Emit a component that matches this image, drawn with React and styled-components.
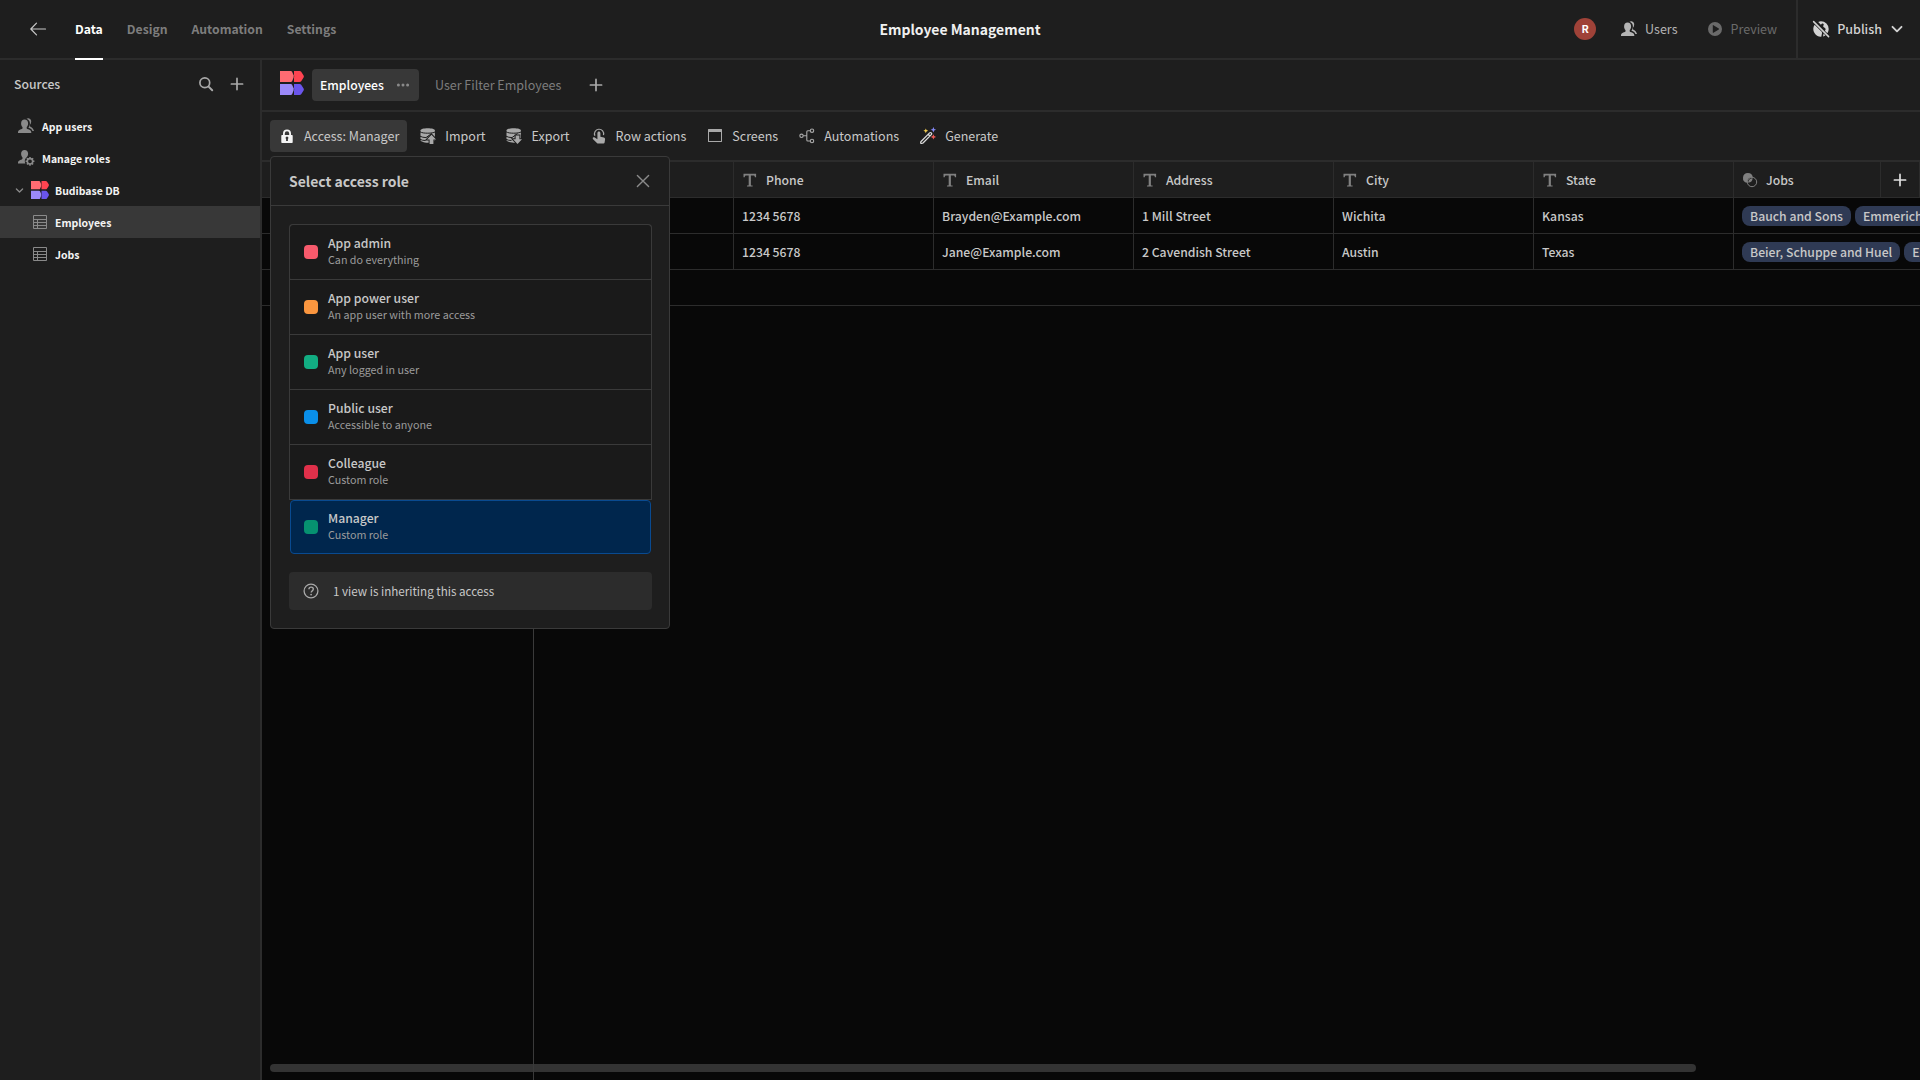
import React, { useState } from 'react';
import styled, { createGlobalStyle } from 'styled-components';

const GlobalStyle = createGlobalStyle`
  * {
    box-sizing: border-box;
  }

  html, body, #root {
    height: 100%;
    margin: 0;
  }

  body {
    background: #080808;
    color: #c8c8c8;
    font-family: "Noto Sans CJK SC", "Noto Sans", sans-serif;
    font-size: 14px;
    font-size-adjust: 0.486;
    line-height: 20px;
    overflow: hidden;
  }

  button {
    background: none;
    border: none;
    color: inherit;
    cursor: pointer;
    font: inherit;
    font-size-adjust: inherit;
    margin: 0;
    padding: 0;
    text-align: left;
  }

  a {
    color: inherit;
    text-decoration: none;
  }

  svg {
    display: block;
    flex: none;
  }
`;

const roles = [
  { name: 'App admin', description: 'Can do everything', color: '#f75a6c' },
  { name: 'App power user', description: 'An app user with more access', color: '#fa963f' },
  { name: 'App user', description: 'Any logged in user', color: '#12ad82' },
  { name: 'Public user', description: 'Accessible to anyone', color: '#0a8fe9' },
  { name: 'Colleague', description: 'Custom role', color: '#e0304a' },
  { name: 'Manager', description: 'Custom role', color: '#069170' },
];

const columns = ['Phone', 'Email', 'Address', 'City', 'State'];

const rows = [
  {
    cells: ['1234 5678', 'Brayden@Example.com', '1 Mill Street', 'Wichita', 'Kansas'],
    jobs: ['Bauch and Sons', 'Emmerich'],
  },
  {
    cells: ['1234 5678', 'Jane@Example.com', '2 Cavendish Street', 'Austin', 'Texas'],
    jobs: ['Beier, Schuppe and Huel', 'Emmerich'],
  },
];

/* icons */

const Svg = ({ size = 16, box = 16, children }) => (
  <svg width={size} height={size} viewBox={`0 0 ${box} ${box}`} fill="currentColor" aria-hidden="true">
    {children}
  </svg>
);

const Stroke = ({ d, width = 1.5 }) => (
  <path d={d} fill="none" stroke="currentColor" strokeWidth={width} strokeLinecap="round" strokeLinejoin="round" />
);

const BackIcon = () => (
  <Svg size={18} box={18}>
    <Stroke width={1.2} d="M16.5 9H2M7.5 3.2 1.8 9l5.7 5.8" />
  </Svg>
);

const SearchIcon = () => (
  <Svg>
    <circle cx="6.8" cy="6.8" r="4.9" fill="none" stroke="currentColor" strokeWidth="1.7" />
    <Stroke width={2} d="m10.6 10.6 3.6 3.6" />
  </Svg>
);

const PlusIcon = () => (
  <Svg>
    <Stroke width={1.7} d="M8 2.4v11.2M2.4 8h11.2" />
  </Svg>
);

const UsersIcon = () => (
  <Svg size={18} box={18}>
    <path d="M7.6 2.6c2.2 0 3.5 1.5 3.5 3.8 0 1.6-.6 2.8-1.4 3.6v1.2c0 .4.3.7.7.8 2.4.7 3.9 1.4 3.9 3.3v.7H1v-.7c0-1.9 1.5-2.6 3.8-3.3.4-.1.7-.4.7-.8V10c-.8-.8-1.4-2-1.4-3.6 0-2.3 1.3-3.8 3.500-3.800Z" />
    <path d="M9.5 1.7c.6-.4 1.3-.6 2-.5 1.900.2 2.800 1.700 2.700 3.500-.1 1.300-.5 2.400-1.200 3.100v1.100c0 .3.2.6.5.8 1.9 1 3 2.200 3.500 4.300h-1.600c-.5-1.800-1.900-2.600-3.900-3.200v-.4c.9-1 1.4-2.400 1.400-4 0-2.300-1.300-4.100-3.400-4.700Z" />
  </Svg>
);

const UserGearIcon = () => (
  <Svg size={18} box={18}>
    <path d="M7.6 1c2.200 0 3.500 1.500 3.500 3.800 0 1.500-.6 2.700-1.400 3.500-1.200.9-1.900 2.200-1.900 3.800 0 .9.2 1.700.6 2.400H1v-.9c0-1.900 1.500-2.500 3.800-3.200.4-.1.7-.4.7-.8V8.400C4.700 7.600 4.100 6.400 4.100 4.800 4.100 2.500 5.400 1 7.600 1Z" />
    <circle cx="13" cy="12.3" r="2.7" fill="none" stroke="currentColor" strokeWidth="1.6" />
    <path d="M13 7.900v2M13 14.700v2M8.600 12.300h2M15.400 12.300h2M9.900 9.200l1.400 1.400M14.700 14l1.400 1.400M16.100 9.200l-1.400 1.400M11.300 14l-1.400 1.400" stroke="currentColor" strokeWidth="1.5" />
  </Svg>
);

const TableIcon = () => (
  <Svg>
    <path d="M1.500 1.500h13v13h-13zM1.500 5.500h13M1.500 8.500h13M1.500 11.500h13M5.500 5.500v9" fill="none" stroke="currentColor" />
  </Svg>
);

const ChevronIcon = ({ width, size = 16 }) => (
  <Svg size={size}>
    <Stroke width={width} d="M3.500 5.800 8 10.300l4.500-4.500" />
  </Svg>
);

const LogoIcon = ({ size = 24 }) => (
  <Svg size={size} box={24}>
    <path fill="#ff6b72" d="M0 0h10.800c.6 0 1 .3 1.300.8l1.500 3.500c.2.700.2 1.500 0 2.200l-1.500 3.700c-.3.500-.7.800-1.300.8H0Z" />
    <path fill="#ff4451" d="M14 0h5.600c.7 0 1.200.3 1.600.8l2.400 3.600c.4.700.4 1.500 0 2.200l-2.400 3.600c-.4.500-.9.800-1.600.8H14V6.800c.3-.9.3-1.800 0-2.700Z" />
    <path fill="#9b89f8" d="M0 13h10.800c.6 0 1 .3 1.300.8l1.500 3.500c.2.700.2 1.500 0 2.200l-1.500 3.700c-.3.500-.7.800-1.300.8H0Z" />
    <path fill="#6a55ec" d="M14 13h5.600c.7 0 1.200.3 1.600.8l2.400 3.600c.4.700.4 1.500 0 2.200l-2.400 3.600c-.4.500-.9.800-1.600.8H14v-4.200c.3-.9.3-1.800 0-2.700Z" />
  </Svg>
);

const DotsIcon = () => (
  <Svg>
    <circle cx="3.4" cy="8" r="1.5" />
    <circle cx="8" cy="8" r="1.5" />
    <circle cx="12.6" cy="8" r="1.5" />
  </Svg>
);

const LockIcon = () => (
  <Svg size={18} box={18}>
    <path fillRule="evenodd" d="M14 8h-1V6.500a4 4 0 0 0-8 0V8H4a.7.7 0 0 0-.7.700v6.600c0 .4.300.7.700.7h10c.4 0 .7-.3.7-.7V8.700A.7.7 0 0 0 14 8ZM6.800 6.500a2.200 2.200 0 0 1 4.400 0V8H6.800ZM9.900 12.100V14H8.100v-1.900a1.400 1.400 0 1 1 1.800 0Z" />
  </Svg>
);

const DataIcon = ({ arrow }) => (
  <Svg size={18} box={18}>
    <path d="M1.500 3.500c0-1.300 3.200-2.200 7.200-2.200s7.200.9 7.200 2.200V13c0 1.400-3.200 2.700-7.200 2.700S1.500 14.400 1.500 13Z" />
    <path d="M1 4.800c1.700 1 4.400 1.400 7.700 1.400s6-.4 7.700-1.400M1 9.200c1.800.9 3.700 1.400 6 1.400l5.500-4M1 12.300c1.800.9 3.200 1.200 5.500 1.200" fill="none" stroke="#1e1e1e" strokeWidth="1" />
    <path d={arrow} stroke="#1e1e1e" strokeWidth="2" />
    <path d={arrow} />
  </Svg>
);

const ImportIcon = () => <DataIcon arrow="m12.500 7.800 4.500 4.700h-2.600v4.500h-3.800v-4.500H8Z" />;

const ExportIcon = () => <DataIcon arrow="m12.500 17 4.500-4.700h-2.600V8.500h-3.800v3.800H8Z" />;

const TapIcon = () => (
  <Svg size={18} box={18}>
    <path d="M4.900 8.800a4.600 4.600 0 1 1 8.600-.7" fill="none" stroke="currentColor" strokeWidth="1.2" />
    <path d="M7.400 6.200c0-1 .7-1.700 1.500-1.700s1.500.7 1.500 1.700v3.600l3.400.7c.9.200 1.400.9 1.300 1.800l-.5 3.300c-.1.600-.5 1-1.100 1H8.300c-.6 0-1-.2-1.400-.6l-3.800-3.800c-.5-.6-.5-1.200 0-1.600.5-.4 1.100-.3 1.600 0l2.700 1.600Z" />
  </Svg>
);

const ScreenIcon = () => (
  <Svg size={18} box={18}>
    <path fillRule="evenodd" d="M2.500 2h13c.3 0 .5.200.5.500v12c0 .3-.2.500-.5.500h-13a.5.500 0 0 1-.5-.5v-12c0-.3.200-.5.500-.5ZM3 5v9h12V5Z" />
  </Svg>
);

const FlowIcon = () => (
  <Svg size={18} box={18}>
    <g fill="none" stroke="currentColor" strokeWidth="1.1">
      <circle cx="3.5" cy="8.8" r="1.7" />
      <circle cx="14" cy="3.7" r="1.7" />
      <circle cx="14" cy="14" r="1.7" />
      <path d="M5.200 8.800h3.600M12.300 3.700H9.800c-.6 0-1 .4-1 1v8.300c0 .6.400 1 1 1h2.500" />
    </g>
  </Svg>
);

const WandIcon = () => (
  <Svg size={18} box={18}>
    <path d="m2.300 14.200 8.300-8.300c.5-.5 1.200-.5 1.700 0s.5 1.200 0 1.700L4 15.900c-.5.400-1.900.6-2.200.3-.3-.3 0-1.500.5-2ZM9.200 7.300l1.700 1.700" fill="none" stroke="#dadada" strokeWidth="1.3" />
    <path fill="#f5cf52" d="m6.800 1.400.7 1.700 1.700.7-1.700.7-.7 1.700-.7-1.700-1.700-.7 1.700-.7Z" />
    <path fill="#8488f5" d="m14.400 0 .8 1.900 1.900.8-1.900.8-.8 1.900-.8-1.900-1.900-.8 1.900-.8Z" />
    <path fill="#ee5a55" d="m14.400 7.200.8 1.900 1.900.8-1.900.8-.8 1.900-.8-1.900-1.900-.8 1.900-.8Z" />
  </Svg>
);

const TextIcon = () => (
  <Svg>
    <path d="M1.500 1.800h12.600v3.400h-1.200c-.1-1.200-.5-1.700-1.500-1.700H8.900v9.300c0 .6.400.8 1.700.8v1H5v-1c1.300 0 1.700-.2 1.700-.8V3.500H4.200c-1 0-1.400.5-1.500 1.700H1.500Z" />
  </Svg>
);

const LinkIcon = () => (
  <Svg>
    <path d="M5.900.9a5 5 0 0 1 4.900 4A5.400 5.400 0 0 0 5 10.800 5 5 0 0 1 5.900.9Z" />
    <path d="M10.700 6.300a5 5 0 0 1-4.500 4.500 4.300 4.300 0 0 1 4.500-4.500Z" />
    <circle cx="10" cy="10" r="4.700" fill="none" stroke="currentColor" strokeWidth="1" />
  </Svg>
);

const PlayIcon = () => (
  <Svg size={18} box={18}>
    <path fillRule="evenodd" d="M9 2a7 7 0 1 0 0 14A7 7 0 0 0 9 2ZM6.800 5.500c0-.3.300-.5.600-.3l5.400 3.400c.3.200.3.600 0 .8l-5.400 3.400c-.3.200-.6 0-.6-.3Z" />
  </Svg>
);

const GlobeOffIcon = () => (
  <Svg size={18} box={18}>
    <path d="M9 1.300a7.700 7.700 0 0 1 7.700 7.700 7.700 7.700 0 0 1-1.300 4.300l-2.600-2.600c.9-.7 1.100-1.600.4-2.500-.6-.8-1.600-.8-2-1.700-.3-.8.700-1.200.5-2.300-.2-.8-1.200-.9-1.900-.4L8.900 4.700 6.200 1.900A7.700 7.700 0 0 1 9 1.300ZM2.600 4.800l6 6c.9.600 1.600 1.400 1.400 2.500l-.7 3.400A7.700 7.700 0 0 1 2.600 4.800ZM11.600 13.600l1.900 1.900-2.500 1Z" />
    <Stroke width={1.500} d="m1.600 1.600 15 15" />
  </Svg>
);

const CloseIcon = () => (
  <Svg>
    <Stroke width={1.400} d="m2.400 2.400 11.200 11.200M13.600 2.400 2.400 13.600" />
  </Svg>
);

const HelpIcon = () => (
  <Svg>
    <circle cx="8" cy="8" r="6.9" fill="none" stroke="currentColor" strokeWidth="1.3" />
    <path d="M5.900 6.200c.1-1.300 1-2.100 2.200-2.100 1.300 0 2.200.8 2.200 1.900 0 .9-.5 1.400-1.100 1.900-.6.500-1 .8-1 1.600" fill="none" stroke="currentColor" strokeWidth="1.4" />
    <circle cx="8.1" cy="11.6" r=".9" />
  </Svg>
);

/* layout */

const Page = styled.div`
  display: flex;
  flex-direction: column;
  height: 100vh;
`;

const Header = styled.header`
  display: grid;
  grid-template-columns: 1fr auto 1fr;
  height: 60px;
  background: #1e1e1e;
  border-bottom: 2px solid #2c2c2c;
`;

const HeaderLeft = styled.div`
  display: flex;
  align-items: stretch;
  gap: 28px;
  padding-left: 29px;
`;

const HeaderRight = styled.div`
  display: flex;
  align-items: stretch;
  justify-content: flex-end;
`;

const HeaderActions = styled.div`
  display: flex;
  align-items: center;
  gap: 24px;
  padding-right: 19px;
`;

const IconButton = styled.button`
  display: flex;
  align-items: center;
  justify-content: center;
  color: ${(props) => props.$color || '#a9a9a9'};
`;

const Nav = styled.nav`
  display: flex;
  gap: 24px;
  margin-bottom: -2px;
`;

const NavLink = styled.a`
  display: flex;
  align-items: center;
  font-size-adjust: 0.474;
  font-weight: 600;
  color: ${(props) => (props.$active ? '#ffffff' : '#7d7d7d')};
  border-bottom: 2px solid ${(props) => (props.$active ? '#ffffff' : 'transparent')};
`;

const AppTitle = styled.h1`
  align-self: center;
  margin: 0;
  color: #f0f0f0;
  font-size: 16px;
  font-size-adjust: 0.474;
  font-weight: 600;
`;

const Avatar = styled.button`
  width: 22px;
  height: 22px;
  border-radius: 50%;
  background: #9f4238;
  color: #ffffff;
  font-size: 12px;
  font-weight: 700;
  text-align: center;
`;

const ActionButton = styled.button`
  display: flex;
  align-items: center;
  gap: 7px;
  color: ${(props) => (props.$muted ? '#6a6a6a' : '#b4b4b4')};

  & + & {
    margin-left: 4px;
  }
`;

const PublishButton = styled.button`
  display: flex;
  align-items: center;
  gap: 7px;
  padding: 0 15px 0 14px;
  border-left: 2px solid #2c2c2c;
  color: #d2d2d2;
  font-weight: 500;
`;

const Body = styled.div`
  display: flex;
  flex: 1;
  min-height: 0;
`;

const Sidebar = styled.aside`
  width: 262px;
  flex: none;
  background: #1e1e1e;
  border-right: 2px solid #2c2c2c;
`;

const SidebarHeader = styled.div`
  display: flex;
  align-items: center;
  gap: 15px;
  height: 50px;
  padding: 0 15px 2px 14px;
`;

const SidebarTitle = styled.h2`
  flex: 1;
  margin: 0;
  font-size: 14px;
  font-size-adjust: 0.474;
  font-weight: 500;
`;

const SourceLink = styled.a`
  display: flex;
  align-items: center;
  gap: 7px;
  height: 32px;
  padding-left: ${(props) => (props.$nested ? '32px' : '17px')};
  background: ${(props) => (props.$active ? '#383838' : 'transparent')};
  color: #f4f4f4;
  font-size: 12px;
  font-size-adjust: 0.474;
  font-weight: 700;

  svg {
    color: #8a8a8a;
  }
`;

const DatabaseLink = styled(SourceLink)`
  gap: 6px;
  padding-left: 14px;
`;

const SourceName = styled.span`
  padding-top: 2px;
`;

const Main = styled.main`
  display: flex;
  flex: 1;
  flex-direction: column;
  min-width: 0;
`;

const ViewBar = styled.div`
  display: flex;
  align-items: center;
  gap: 8px;
  height: 52px;
  padding-left: 18px;
  background: #1e1e1e;
  border-bottom: 2px solid #2c2c2c;
`;

const ViewLogo = styled.span`
  padding-bottom: 4px;
`;

const ViewTab = styled.div`
  display: flex;
  align-items: center;
  gap: 11px;
  height: 32px;
  padding: 0 8px;
  border-radius: 4px;
  background: ${(props) => (props.$active ? '#383838' : 'transparent')};
  color: ${(props) => (props.$active ? '#ffffff' : '#7d7d7d')};
  font-size-adjust: ${(props) => (props.$active ? 0.474 : 0.486)};
  font-weight: ${(props) => (props.$active ? 500 : 400)};
`;

const AddViewButton = styled(IconButton)`
  width: 32px;
  height: 32px;
  margin-left: 3px;
`;

const Toolbar = styled.div`
  display: flex;
  align-items: center;
  gap: 4px;
  height: 50px;
  padding-left: 8px;
  background: #1e1e1e;
  border-bottom: 2px solid #2c2c2c;
`;

const ToolButton = styled.button`
  display: flex;
  align-items: center;
  gap: 8px;
  height: 32px;
  padding: 0 8px;
  border-radius: 4px;
  background: ${(props) => (props.$active ? '#383838' : 'transparent')};
  color: #c8c8c8;

  svg {
    color: ${(props) => (props.$active ? '#f4f4f4' : '#a9a9a9')};
  }
`;

const PopoverAnchor = styled.div`
  position: relative;
`;

const Popover = styled.section`
  position: absolute;
  top: 36px;
  left: 0;
  z-index: 10;
  width: 400px;
  background: #1e1e1e;
  border: 1px solid #3a3a3a;
  border-radius: 4px;
`;

const PopoverHeader = styled.div`
  display: flex;
  align-items: center;
  justify-content: space-between;
  height: 49px;
  padding: 0 18px;
  border-bottom: 1px solid #3a3a3a;
`;

const PopoverTitle = styled.h2`
  margin: 0;
  font-size: 16px;
  font-size-adjust: 0.474;
  font-weight: 600;
`;

const PopoverBody = styled.div`
  display: flex;
  flex-direction: column;
  gap: 18px;
  padding: 18px 17px 18px 18px;
`;

/* the grey shows through as hairlines, down to the last role */
const RoleList = styled.div`
  display: flex;
  flex-direction: column;
  gap: 1px;
  padding: 1px 1px 0;
  background: linear-gradient(to bottom, #3a3a3a calc(100% - 54px), #1e1e1e calc(100% - 54px));
  border-radius: 4px;
`;

const RoleButton = styled.button`
  display: flex;
  align-items: center;
  gap: 10px;
  height: 54px;
  padding: 0 13px;
  background: ${(props) => (props.$selected ? '#00264d' : '#1a1a1a')};
  border: 1px solid ${(props) => (props.$selected ? '#094a90' : '#1a1a1a')};
  border-radius: ${(props) => (props.$selected ? '4px' : '0')};

  &:first-child {
    border-radius: 3px 3px 0 0;
  }
`;

const Swatch = styled.span`
  width: 14px;
  height: 14px;
  border-radius: 4px;
  background: ${(props) => props.$color};
`;

const RoleText = styled.span`
  display: flex;
  flex-direction: column;
`;

const RoleName = styled.span`
  line-height: 16px;
  font-size-adjust: 0.474;
  font-weight: 500;
`;

const RoleDescription = styled.span`
  line-height: 18px;
  color: #9c9c9c;
  font-size: 12px;
`;

const Notice = styled.div`
  display: flex;
  align-items: center;
  gap: 14px;
  height: 38px;
  padding: 0 14px;
  border-radius: 4px;
  background: #2c2c2c;
  font-size: 13px;

  svg {
    color: #a9a9a9;
  }
`;

const Grid = styled.div`
  position: relative;
  flex: 1;
  overflow: hidden;
  background: #080808;
`;

const Table = styled.table`
  width: 1672px;
  table-layout: fixed;
  border-collapse: separate;
  border-spacing: 0;
  font-size-adjust: 0.474;
`;

const HeadCell = styled.th`
  height: 36px;
  padding: 0 8px;
  background: #1e1e1e;
  border-right: 1px solid #2c2c2c;
  border-bottom: 1px solid #2c2c2c;
  font-weight: 500;
  text-align: left;
`;

const HeadLabel = styled.span`
  display: flex;
  align-items: center;
  gap: 8px;

  svg {
    color: #808080;
  }
`;

const Cell = styled.td`
  height: 36px;
  padding: 0 8px;
  border-right: 1px solid #2c2c2c;
  border-bottom: 1px solid #2c2c2c;
  font-weight: 500;
  white-space: nowrap;
`;

const NewRowCell = styled(Cell)`
  border-right: none;
`;

const Pills = styled.div`
  display: flex;
  gap: 4px;
`;

const Pill = styled.span`
  flex: none;
  padding: 0 8px;
  border-radius: 8px;
  background: #2f3a54;
`;

const AddColumnButton = styled(IconButton)`
  position: absolute;
  top: 0;
  right: 0;
  width: 40px;
  height: 36px;
  background: #1e1e1e;
  border: solid #2c2c2c;
  border-width: 0 1px 1px 1px;
`;

const StickyEdge = styled.div`
  position: absolute;
  top: 0;
  bottom: 0;
  left: 271px;
  width: 1px;
  background: #3a3a3a;
`;

const ScrollThumb = styled.div`
  position: absolute;
  bottom: 8px;
  left: 8px;
  width: 86%;
  height: 8px;
  border-radius: 4px;
  background: #333333;
`;

const tools = [
  { label: 'Import', Icon: ImportIcon },
  { label: 'Export', Icon: ExportIcon },
  { label: 'Row actions', Icon: TapIcon },
  { label: 'Screens', Icon: ScreenIcon },
  { label: 'Automations', Icon: FlowIcon },
  { label: 'Generate', Icon: WandIcon },
];

function TopBar() {
  return (
    <Header>
      <HeaderLeft>
        <IconButton aria-label="Back" $color="#c8c8c8"><BackIcon /></IconButton>
        <Nav>
          <NavLink href="#data" $active>Data</NavLink>
          <NavLink href="#design">Design</NavLink>
          <NavLink href="#automation">Automation</NavLink>
          <NavLink href="#settings">Settings</NavLink>
        </Nav>
      </HeaderLeft>
      <AppTitle>Employee Management</AppTitle>
      <HeaderRight>
        <HeaderActions>
          <Avatar>R</Avatar>
          <ActionButton><UsersIcon />Users</ActionButton>
          <ActionButton $muted><PlayIcon />Preview</ActionButton>
        </HeaderActions>
        <PublishButton><GlobeOffIcon />Publish<ChevronIcon width={1.9} /></PublishButton>
      </HeaderRight>
    </Header>
  );
}

function Sources() {
  return (
    <Sidebar>
      <SidebarHeader>
        <SidebarTitle>Sources</SidebarTitle>
        <IconButton aria-label="Search"><SearchIcon /></IconButton>
        <IconButton aria-label="Add source"><PlusIcon /></IconButton>
      </SidebarHeader>
      <SourceLink href="#users"><UsersIcon /><SourceName>App users</SourceName></SourceLink>
      <SourceLink href="#roles"><UserGearIcon /><SourceName>Manage roles</SourceName></SourceLink>
      <DatabaseLink href="#db">
        <ChevronIcon size={11} width={1.9} />
        <LogoIcon size={18} />
        <SourceName>Budibase DB</SourceName>
      </DatabaseLink>
      <SourceLink href="#employees" $nested $active><TableIcon /><SourceName>Employees</SourceName></SourceLink>
      <SourceLink href="#jobs" $nested><TableIcon /><SourceName>Jobs</SourceName></SourceLink>
    </Sidebar>
  );
}

function AccessPopover({ selected, onSelect, onClose }) {
  return (
    <Popover>
      <PopoverHeader>
        <PopoverTitle>Select access role</PopoverTitle>
        <IconButton aria-label="Close" $color="#8a8a8a" onClick={onClose}><CloseIcon /></IconButton>
      </PopoverHeader>
      <PopoverBody>
        <RoleList>
          {roles.map((role) => (
            <RoleButton key={role.name} $selected={role.name === selected} onClick={() => onSelect(role.name)}>
              <Swatch $color={role.color} />
              <RoleText>
                <RoleName>{role.name}</RoleName>
                <RoleDescription>{role.description}</RoleDescription>
              </RoleText>
            </RoleButton>
          ))}
        </RoleList>
        <Notice><HelpIcon />1 view is inheriting this access</Notice>
      </PopoverBody>
    </Popover>
  );
}

function DataGrid() {
  return (
    <Grid>
      <Table>
        <colgroup>
          <col style={{ width: 272 }} />
          <col />
          {columns.map((column) => <col key={column} />)}
          <col />
        </colgroup>
        <thead>
          <tr>
            <HeadCell />
            <HeadCell />
            {columns.map((column) => (
              <HeadCell key={column}><HeadLabel><TextIcon />{column}</HeadLabel></HeadCell>
            ))}
            <HeadCell><HeadLabel><LinkIcon />Jobs</HeadLabel></HeadCell>
          </tr>
        </thead>
        <tbody>
          {rows.map((row, index) => (
            <tr key={index}>
              <Cell />
              <Cell />
              {row.cells.map((cell, i) => <Cell key={i}>{cell}</Cell>)}
              <Cell>
                <Pills>{row.jobs.map((job) => <Pill key={job}>{job}</Pill>)}</Pills>
              </Cell>
            </tr>
          ))}
          <tr>
            <NewRowCell colSpan={8} />
          </tr>
        </tbody>
      </Table>
      <AddColumnButton aria-label="Add column" $color="#e0e0e0"><PlusIcon /></AddColumnButton>
      <ScrollThumb />
      <StickyEdge />
    </Grid>
  );
}

export default function App() {
  const [open, setOpen] = useState(true);
  const [role, setRole] = useState('Manager');

  return (
    <Page>
      <GlobalStyle />
      <TopBar />
      <Body>
        <Sources />
        <Main>
          <ViewBar>
            <ViewLogo><LogoIcon /></ViewLogo>
            <ViewTab $active>
              <a href="#employees">Employees</a>
              <IconButton aria-label="View options" $color="#8a8a8a"><DotsIcon /></IconButton>
            </ViewTab>
            <ViewTab><a href="#filter">User Filter Employees</a></ViewTab>
            <AddViewButton aria-label="Add view"><PlusIcon /></AddViewButton>
          </ViewBar>
          <Toolbar>
            <PopoverAnchor>
              <ToolButton $active onClick={() => setOpen(!open)}><LockIcon />Access: {role}</ToolButton>
              {open && <AccessPopover selected={role} onSelect={setRole} onClose={() => setOpen(false)} />}
            </PopoverAnchor>
            {tools.map(({ label, Icon }) => (
              <ToolButton key={label}><Icon />{label}</ToolButton>
            ))}
          </Toolbar>
          <DataGrid />
        </Main>
      </Body>
    </Page>
  );
}
